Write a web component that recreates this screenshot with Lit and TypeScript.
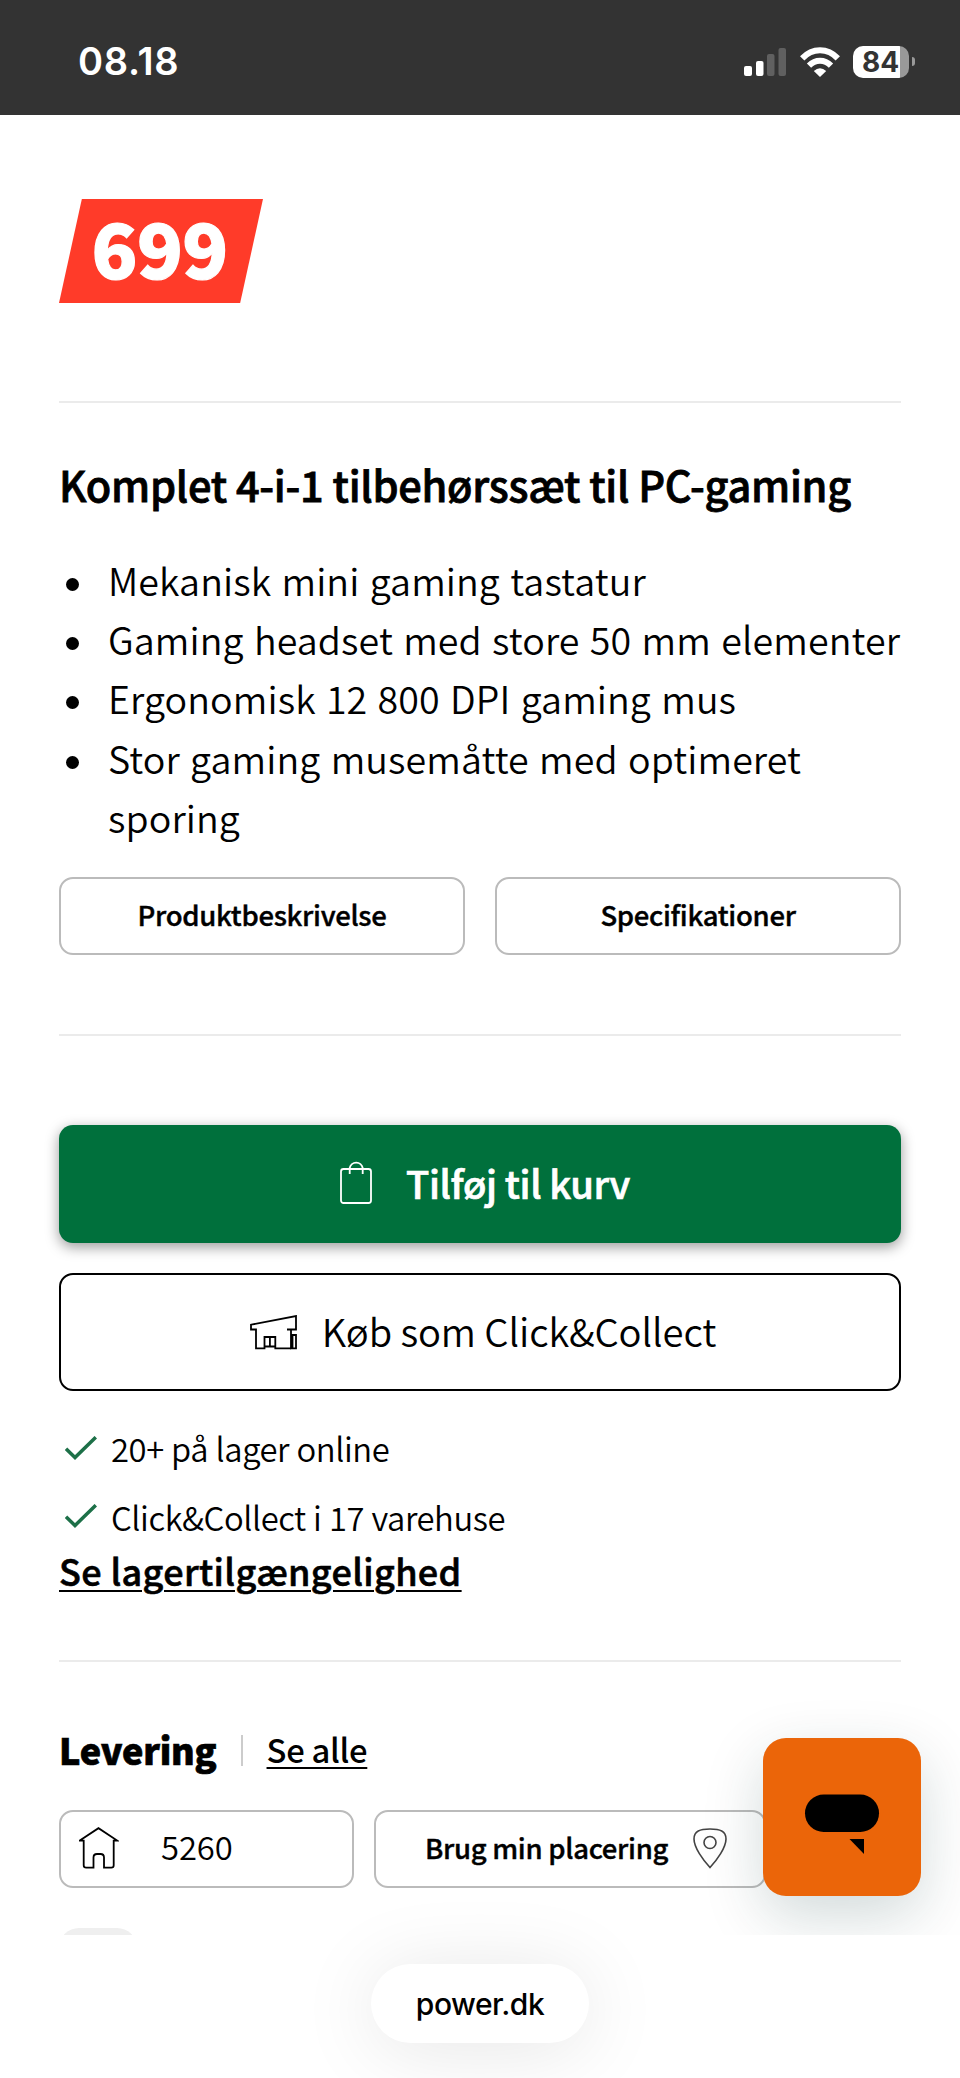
import { LitElement, html, css } from "lit";
import { customElement } from "lit/decorators.js";

const FEATURES = [
  "Mekanisk mini gaming tastatur",
  "Gaming headset med store 50 mm elementer",
  "Ergonomisk 12 800 DPI gaming mus",
  "Stor gaming musemåtte med optimeret sporing",
];

const STOCK = ["20+ på lager online", "Click&Collect i 17 varehuse"];

const signalIcon = html`<svg class="signal" width="42" height="28" viewBox="0 0 42 28">
  <rect x="0" y="18" width="8" height="10" rx="2" fill="#fff" />
  <rect x="12" y="13" width="7.5" height="15" rx="2" fill="#fff" />
  <rect x="23" y="6" width="7.5" height="22" rx="2" fill="#606060" />
  <rect x="34.5" y="0" width="7.5" height="28" rx="2" fill="#606060" />
</svg>`;

const wifiIcon = html`<svg class="wifi" width="40" height="30" viewBox="0 0 40 30">
  <g fill="none" stroke="#fff" stroke-width="6">
    <path d="M2.2 11.4C12.4 .6 27.6 .6 37.8 11.4" />
    <path d="M9 18.6C15.4 12.1 24.6 12.1 31 18.6" />
  </g>
  <path d="M20 30L13.8 23.9Q20 18.6 26.2 23.9Z" fill="#fff" />
</svg>`;

const bagIcon = html`<svg class="bag" width="32" height="44" viewBox="0 0 32 44" fill="none" stroke="#fff" stroke-width="1.8">
  <rect x="1" y="9" width="30" height="34" rx="2.5" />
  <path d="M9.700 14V8A6.600 6.600 0 0 1 22.700 8V14" />
</svg>`;

const storeIcon = html`<svg class="store" width="47" height="35" viewBox="0 0 47 35" fill="none" stroke="#000" stroke-width="1.8">
  <path d="M37 14.500H46V1L1 9.700V14.500H6V33.300H14.500V22H25.300V33.300H41" />
  <path d="M19.900 22V31.500M14.500 31.500H25.300" />
  <path d="M41 14.500V33.300H46V20H42.500V33.300" />
</svg>`;

const checkIcon = html`<svg class="check" width="32" height="24" viewBox="0 0 32 24" fill="none" stroke="#1d7048" stroke-width="3.500">
  <path d="M1 12.800L10 21.500L30.800 1.200" />
</svg>`;

const houseIcon = html`<svg class="house" width="40" height="42" viewBox="0 0 40 42" fill="none" stroke="#000" stroke-width="1.8">
  <path d="M.8 13.600L19.500 1.200L38.200 13.600H34.700V38.200Q34.700 40.600 32.300 40.600H25V30.500Q25 27 21.500 27H18Q14.500 27 14.500 30.500V40.600H7.200Q4.700 40.600 4.700 38.200V13.600Z" />
</svg>`;

const pinIcon = html`<svg class="pin" width="34" height="41" viewBox="0 0 34 41" fill="none" stroke="#444" stroke-width="1.6">
  <path d="M17 39.500C10 32 1 19.500 1 11C1 3 7 1 17 1C27 1 33 3 33 11C33 19.500 24 32 17 39.500Z" />
  <circle cx="17" cy="14.500" r="6" />
</svg>`;

@customElement("status-bar")
class StatusBar extends LitElement {
  static styles = css`
    :host {
      display: flex;
      align-items: center;
      height: 115px;
      box-sizing: border-box;
      padding: 8px 45px 0 78px;
      background: #333;
      color: #fff;
    }
    .time {
      font: 600 38px/44px Inter, sans-serif;
      letter-spacing: 0.7px;
      flex: 1;
      margin-top: -1px;
    }
    .signal {
      margin-right: 14px;
    }
    .wifi {
      margin-right: 13px;
    }
    .battery {
      display: flex;
      align-items: center;
      gap: 3px;
    }
    .cell {
      width: 56px;
      height: 32px;
      border-radius: 10px;
      background: linear-gradient(90deg, #fff 47px, #999 47px);
      color: #333;
      font: 700 28px/32px Inter, sans-serif;
      text-indent: 9px;
    }
    .nub {
      width: 3px;
      height: 9px;
      border-radius: 0 3px 3px 0;
      background: #999;
    }
  `;
  render() {
    return html`<div class="time">08.18</div>
      ${signalIcon}${wifiIcon}
      <div class="battery"><div class="cell">84</div><div class="nub"></div></div>`;
  }
}

@customElement("app-root")
class AppRoot extends LitElement {
  static styles = css`
    :host {
      display: block;
      height: 2078px;
      position: relative;
      overflow: hidden;
      background: #fff;
      color: #000;
      font-family: "Noto Sans CJK SC", "Noto Sans", sans-serif;
    }
    * {
      box-sizing: border-box;
    }
    main {
      height: 1820px;
      padding: 84px 59px 0;
      overflow: hidden;
      position: relative;
    }
    svg {
      display: block;
      flex: none;
    }
    .price {
      width: 204px;
      height: 104px;
      background: #ff3b29;
      clip-path: polygon(11.2% 0, 100% 0, 88.8% 100%, 0 100%);
      color: #fff;
      font-weight: 900;
      font-size: 75.500px;
      line-height: 94px;
      padding-left: 32.500px;
      letter-spacing: -0.600px;
      -webkit-text-stroke: 1.200px #fff;
    }
    hr {
      border: 0;
      height: 2px;
      margin: 0;
      background: #ebebeb;
    }
    .price + hr {
      margin-top: 98px;
    }
    h1 {
      margin: 51px 0 0;
      font-weight: 500;
      font-size: 41.5px;
      line-height: 60px;
      letter-spacing: -0.27px;
      white-space: nowrap;
      -webkit-text-stroke: 0.800px #000;
    }
    ul {
      list-style: none;
      margin: 36px 0 0;
      padding: 0;
      font-weight: 350;
      font-size: 37.6px;
      line-height: 59.2px;
      letter-spacing: 0.1px;
      word-spacing: 1.8px;
    }
    li {
      display: flex;
      padding-left: 7px;
    }
    .dot {
      flex: none;
      width: 13px;
      height: 13px;
      border-radius: 50%;
      background: #000;
      margin: 28px 29px 0 0;
    }
    .pair {
      display: grid;
      grid-template-columns: 1fr 1fr;
      gap: 30px;
      margin: 31px 0 79px;
    }
    .box {
      display: flex;
      align-items: center;
      justify-content: center;
      height: 78px;
      border: 2px solid #bbb;
      border-radius: 14px;
      padding-bottom: 4px;
      font-weight: 500;
      font-size: 27.5px;
      letter-spacing: -0.3px;
      white-space: nowrap;
      -webkit-text-stroke: 0.400px #000;
    }
    .cta {
      display: flex;
      align-items: center;
      justify-content: center;
      height: 118px;
      border-radius: 14px;
      font-size: 38.2px;
      white-space: nowrap;
    }
    .buy {
      margin-top: 89px;
      background: #00703c;
      color: #fff;
      font-weight: 500;
      box-shadow: 0 4px 14px rgba(0, 0, 0, 0.4);
      gap: 34px;
      padding-left: 10px;
      letter-spacing: -0.4px;
      -webkit-text-stroke: 0.700px #fff;
    }
    .buy .bag {
      margin-top: -5px;
    }
    .collect {
      margin-top: 30px;
      border: 2px solid #000;
      font-weight: 350;
      gap: 25px;
      padding-left: 6px;
      letter-spacing: -0.1px;
    }
    .cta span {
      padding-bottom: 4px;
    }
    .stock {
      display: grid;
      gap: 8.600px;
      margin-top: 27px;
      font-weight: 350;
      font-size: 32.8px;
      line-height: 60px;
      letter-spacing: -0.430px;
      word-spacing: 0.500px;
    }
    .row {
      display: flex;
      align-items: center;
      padding-left: 6px;
      gap: 14px;
    }
    .check {
      margin-top: -1px;
    }
    a {
      color: inherit;
      text-decoration: underline;
      text-decoration-thickness: 2px;
      text-underline-offset: 4px;
    }
    .link {
      display: block;
      margin-bottom: 67px;
      font-weight: 500;
      font-size: 36px;
      line-height: 46px;
      letter-spacing: 0.36px;
      -webkit-text-stroke: 0.600px #000;
    }
    .head {
      display: flex;
      align-items: center;
      margin: 62px 0 36px;
      line-height: 50px;
    }
    h2 {
      margin: 0;
      font-size: 36px;
      font-weight: 900;
      letter-spacing: -0.2px;
      -webkit-text-stroke: 0.700px #000;
    }
    .sep {
      width: 2px;
      height: 31px;
      margin: 3px 24px 0;
      background: #ccc;
    }
    .all {
      font-size: 32.8px;
      font-weight: 500;
      letter-spacing: -0.300px;
    }
    .delivery {
      display: flex;
      gap: 20px;
    }
    .zip {
      width: 295px;
      justify-content: flex-start;
      padding-left: 18px;
      padding-bottom: 6px;
      gap: 42px;
      font-weight: 350;
      font-size: 32.8px;
      letter-spacing: -0.1px;
      -webkit-text-stroke: 0;
    }
    .house {
      margin-top: 4px;
    }
    .place {
      width: 392px;
      justify-content: flex-start;
      padding-left: 49px;
      gap: 25px;
    }
    .pin {
      margin-top: 4px;
    }
    .chip {
      width: 78px;
      height: 40px;
      margin-top: 40px;
      border-radius: 20px;
      background: #efefef;
    }
    .chat {
      position: absolute;
      left: 763px;
      top: 1623px;
      width: 158px;
      height: 158px;
      border-radius: 23px;
      background: #eb6509;
      box-shadow: 0 20px 60px rgba(0, 50, 50, 0.18);
    }
    footer {
      height: 143px;
      display: flex;
      justify-content: center;
      padding-top: 29px;
      position: relative;
    }
    .url {
      width: 218px;
      height: 79px;
      border-radius: 40px;
      background: #fff;
      box-shadow: 0 6px 80px rgba(0, 0, 0, 0.1);
      font: 500 30px/81px Inter, sans-serif;
      letter-spacing: -0.5px;
      text-align: center;
    }
  `;

  render() {
    return html`<status-bar></status-bar>
      <main>
        <div class="price">699</div>
        <hr />
        <h1>Komplet 4-i-1 tilbehørssæt til PC-gaming</h1>
        <ul>
          ${FEATURES.map((f) => html`<li><i class="dot"></i><span>${f}</span></li>`)}
        </ul>
        <div class="pair">
          <div class="box">Produktbeskrivelse</div>
          <div class="box">Specifikationer</div>
        </div>
        <hr />
        <div class="cta buy">${bagIcon}<span>Tilføj til kurv</span></div>
        <div class="cta collect">${storeIcon}<span>Køb som Click&amp;Collect</span></div>
        <div class="stock">${STOCK.map((s) => html`<div class="row">${checkIcon}<span>${s}</span></div>`)}</div>
        <a class="link">Se lagertilgængelighed</a>
        <hr />
        <div class="head">
          <h2>Levering</h2>
          <i class="sep"></i>
          <a class="all">Se alle</a>
        </div>
        <div class="delivery">
          <div class="box zip">${houseIcon}<span>5260</span></div>
          <div class="box place"><span>Brug min placering</span>${pinIcon}</div>
        </div>
        <div class="chip"></div>
        <div class="chat">
          <svg width="158" height="158" viewBox="0 0 158 158">
            <rect x="42" y="56.500" width="74" height="37.500" rx="18.700" />
            <path d="M86.500 101H101V116Z" />
          </svg>
        </div>
      </main>
      <footer><div class="url">power.dk</div></footer>`;
  }
}
